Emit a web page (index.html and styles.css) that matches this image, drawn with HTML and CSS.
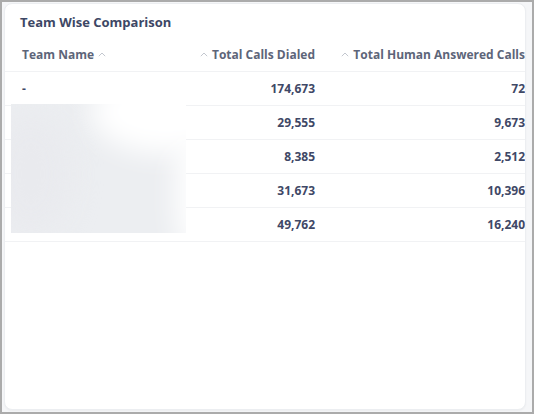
FILE: index.html
```html
<!DOCTYPE html>
<html>
<head>
<meta charset="utf-8">
<link rel="stylesheet" href="styles.css">
</head>
<body>
<div class="frame">
  <div class="card">
    <h2 class="title">Team Wise Comparison</h2>
    <div class="table-wrap">
      <table class="table">
        <thead>
          <tr>
            <th class="col-name">Team Name <span class="caret"><svg width="8" height="5" viewBox="0 0 8 5"><path d="M0.8 4.2 L4 1 L7.2 4.2" fill="none" stroke="#c3c7cf" stroke-width="1"/></svg></span></th>
            <th class="num col-dialed"><span class="caret pre"><svg width="8" height="5" viewBox="0 0 8 5"><path d="M0.8 4.2 L4 1 L7.2 4.2" fill="none" stroke="#c3c7cf" stroke-width="1"/></svg></span>Total Calls Dialed</th>
            <th class="num col-human"><span class="caret pre"><svg width="8" height="5" viewBox="0 0 8 5"><path d="M0.8 4.2 L4 1 L7.2 4.2" fill="none" stroke="#c3c7cf" stroke-width="1"/></svg></span>Total Human Answered Calls</th>
          </tr>
        </thead>
        <tbody>
          <tr><td>-</td><td class="num">174,673</td><td class="num">72</td></tr>
          <tr><td></td><td class="num">29,555</td><td class="num">9,673</td></tr>
          <tr><td></td><td class="num">8,385</td><td class="num">2,512</td></tr>
          <tr><td></td><td class="num">31,673</td><td class="num">10,396</td></tr>
          <tr><td></td><td class="num">49,762</td><td class="num">16,240</td></tr>
        </tbody>
      </table>
      <div class="redact"><div class="blob b1"></div><div class="blob b2"></div><div class="blob b3"></div></div>
    </div>
  </div>
</div>
</body>
</html>
```
FILE: styles.css
```css
html, body {
  margin: 0;
  padding: 0;
}
body {
  width: 534px;
  height: 414px;
  font-family: "Open Sans", "Noto Sans", sans-serif;
}
.frame {
  box-sizing: border-box;
  width: 534px;
  height: 414px;
  border: 2px solid #ababab;
  background: #f5f6f8;
  padding: 1px 6px 2px 2px;
  display: flex;
}
.card {
  flex: 1;
  background: #ffffff;
  border: 1px solid #eceef1;
  border-radius: 8px;
  overflow: hidden;
  box-shadow: 0 1px 2px rgba(0,0,0,0.04);
}
.title {
  margin: 0;
  padding: 9px 0 0 15px;
  height: 22px;
  font-size: 13px;
  font-weight: 700;
  color: #3d4765;
  line-height: 18px;
}
.table-wrap {
  position: relative;
}
.table {
  border-collapse: collapse;
  width: 100%;
}
.table th {
  height: 36px;
  font-size: 12px;
  font-weight: 700;
  color: #5d6579;
  text-align: left;
  padding: 0 0 0 17px;
  border-bottom: 1px solid #f1f2f4;
  vertical-align: middle;
  white-space: nowrap;
}
.table td {
  height: 33px;
  font-size: 12px;
  font-weight: 700;
  color: #3f4866;
  padding: 0 0 0 17px;
  border-bottom: 1px solid #f1f2f4;
  white-space: nowrap;
}
.table .num {
  text-align: right;
  padding: 0;
}
.col-name { width: 158px; }
.col-dialed { width: 135px; }
.caret {
  display: inline-block;
  vertical-align: 2px;
  margin-left: 1px;
}
.caret.pre {
  margin-left: 0;
  margin-right: 4px;
}
.redact {
  position: absolute;
  left: 6px;
  top: 69px;
  width: 175px;
  height: 129px;
  overflow: hidden;
  background: #eceef1;
}
.blob {
  position: absolute;
  filter: blur(14px);
}
.b1 {
  left: 80px;
  top: -35px;
  width: 150px;
  height: 85px;
  background: #ffffff;
  border-radius: 50%;
}
.b2 {
  left: 165px;
  top: 30px;
  width: 40px;
  height: 120px;
  background: #ffffff;
  border-radius: 40%;
}
.b3 {
  left: -20px;
  top: 10px;
  width: 80px;
  height: 120px;
  background: #e9eaee;
  border-radius: 50%;
}
```
